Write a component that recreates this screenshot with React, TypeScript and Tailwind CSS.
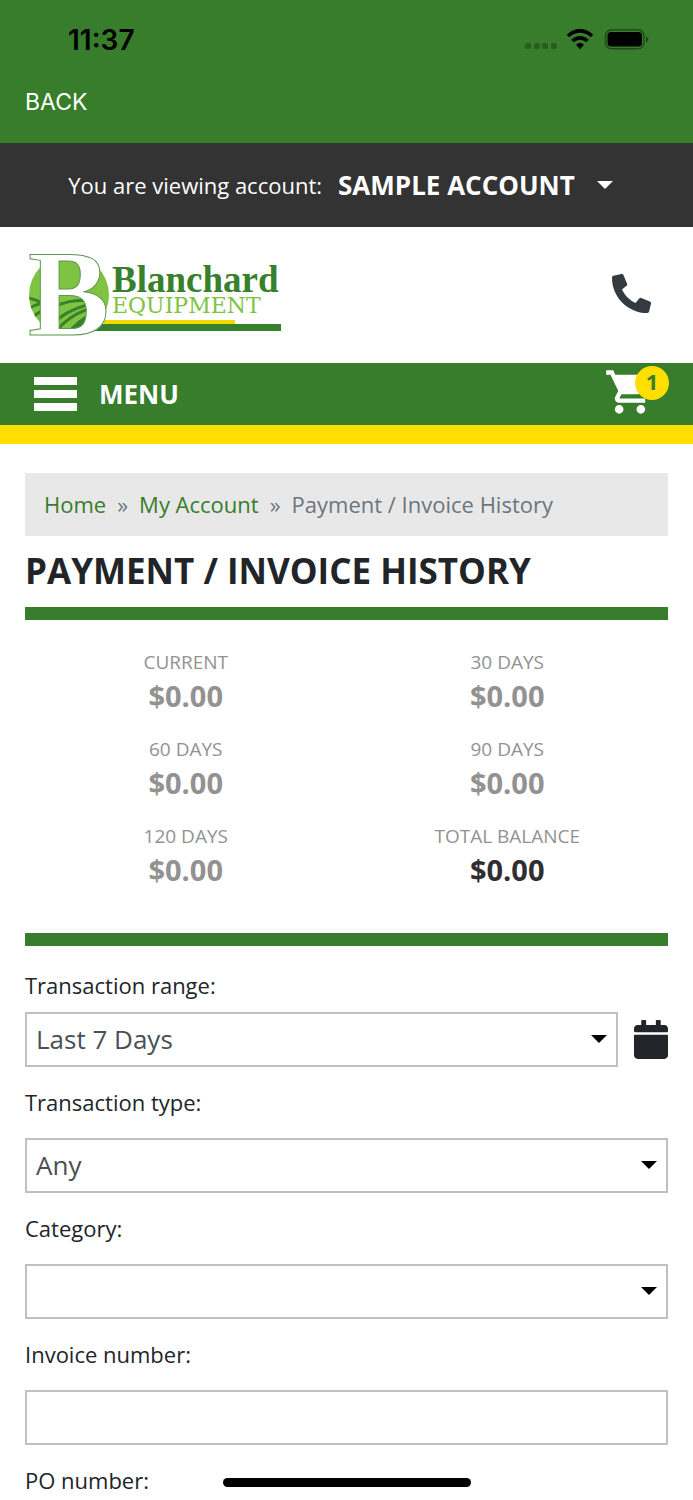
import { FaCalendar, FaPhoneAlt } from "react-icons/fa";
import { MdShoppingCart } from "react-icons/md";

const balances = [
  { label: "Current", amount: "$0.00" },
  { label: "30 Days", amount: "$0.00" },
  { label: "60 Days", amount: "$0.00" },
  { label: "90 Days", amount: "$0.00" },
  { label: "120 Days", amount: "$0.00" },
  { label: "Total Balance", amount: "$0.00", total: true },
];

const fieldClass =
  "block h-[55px] w-full appearance-none rounded-none border-2 border-[#c0c0c0] bg-white pl-[9px] pr-12 text-[26px] text-[#495057] outline-none";
const labelClass = "block text-[22px] leading-9 text-[#212529]";

function Caret({ className }: { className: string }) {
  return (
    <svg viewBox="0 0 16 8" className={className} fill="currentColor" aria-hidden="true">
      <path d="M0 0h16l-8 8z" />
    </svg>
  );
}

function StatusBar() {
  return (
    <div className="flex h-16 items-end justify-between pb-2 pl-[68px] pr-11 text-black">
      <span className="font-['Inter',sans-serif] text-[28px] font-semibold leading-8">11:37</span>
      <svg width="124" height="28" viewBox="0 -1 124 28" aria-hidden="true">
        <g opacity=".25">
          <rect x="0" y="14" width="6" height="6" rx="2" />
          <rect x="9" y="14" width="6" height="6" rx="2" />
          <rect x="17" y="14" width="6" height="6" rx="2" />
          <rect x="26" y="14" width="6" height="6" rx="2" />
        </g>
        <g fill="none" stroke="currentColor" strokeWidth="3.6">
          <path d="M43 7C50 .2 60 .2 67 7" />
          <path d="M47.500 12C52 7.800 58 7.800 62.500 12" />
        </g>
        <path d="M51 15.800c2.500-2.400 5.500-2.400 8 0l-4 4.400z" />
        <rect x="80.500" y=".800" width="38.500" height="19" rx="6" fill="none" stroke="currentColor" strokeOpacity=".4" strokeWidth="1.500" />
        <rect x="82.500" y="3" width="34.500" height="14.500" rx="3.500" />
        <path d="M121 7.500c3 1 3 5 0 6z" opacity=".4" />
      </svg>
    </div>
  );
}

function Logo() {
  return (
    <svg width="256" height="88" viewBox="0 0 256 88" className="overflow-visible" role="img" aria-label="Blanchard Equipment">
      <defs>
        <clipPath id="field">
          <circle cx="41" cy="46" r="40" />
        </clipPath>
      </defs>
      <g clipPath="url(#field)">
        <rect width="84" height="88" fill="#80c342" />
        <g stroke="#37802c" strokeWidth="3" fill="none">
          <path d="M0 49Q12 51 24 60" />
          <path d="M2 59Q12 53 24 54" />
          <path d="M4 69Q12 61 26 57" />
          <path d="M30 56Q50 48 72 54" />
          <path d="M30 70Q46 57 72 54" />
          <path d="M30 80Q46 62 72 57" />
        </g>
        <path d="M36 88Q46 71 70 60V88Z" fill="#37802c" />
      </g>
      <rect x="76" y="71" width="131" height="5" fill="#f2d900" />
      <rect x="66" y="75" width="187" height="7" fill="#37802c" />
      <text x="0" y="86" fontFamily="Liberation Serif, serif" fontWeight="700" fontSize="122" fill="#fff" stroke="#5a9a50" strokeWidth="1">B</text>
      <text x="84" y="43" fontFamily="Liberation Serif, serif" fontWeight="700" fontSize="37" fill="#37802c">Blanchard</text>
      <text x="84" y="64" fontFamily="DejaVu Serif, serif" fontSize="22" fill="#80c342">EQUIPMENT</text>
    </svg>
  );
}

function Divider() {
  return <div className="h-[13px] bg-[#377d2b]" />;
}

export default function App() {
  return (
    <div className="flex h-dvh flex-col overflow-hidden bg-white font-['Open_Sans',sans-serif] text-[#212529]">
      <div className="h-[143px] shrink-0 bg-[#377d2b]">
        <StatusBar />
        <button type="button" className="ml-[25px] mt-[22px] block font-['Inter',sans-serif] text-[23px] leading-8 text-white">
          BACK
        </button>
      </div>

      <div className="min-h-0 flex-1 overflow-y-auto [scrollbar-width:none]">
        <div className="flex h-[84px] items-center justify-center bg-[#333] px-4 text-white">
          <span className="text-[22px]">You are viewing account:</span>
          <button type="button" className="ml-4 flex items-center text-[26px] font-bold">
            SAMPLE ACCOUNT
            <Caret className="ml-[22px] mr-3 h-2 w-4" />
          </button>
        </div>

        <header>
          <div className="flex h-[136px] items-center justify-between pb-1 pl-7 pr-[42px]">
            <a href="#home">
              <Logo />
            </a>
            <a href="#call" aria-label="Call us">
              <FaPhoneAlt className="size-[39px] text-[#343a40]" />
            </a>
          </div>
          <nav className="flex h-[81px] items-center justify-between border-b-[19px] border-[#ffde00] bg-[#377d2b] pl-[34px] pr-6 text-white">
            <button type="button" className="flex items-center gap-[22px] text-[26px] font-bold">
              <span className="flex w-[43px] flex-col gap-[5px]">
                <span className="h-2 bg-white" />
                <span className="h-2 bg-white" />
                <span className="h-2 bg-white" />
              </span>
              MENU
            </button>
            <a href="#cart" aria-label="Cart, 1 item" className="relative block w-[65px] pb-1">
              <MdShoppingCart className="size-[52px]" />
              <span className="absolute right-0 top-0 flex size-[34px] items-center justify-center rounded-full bg-[#ffde00] pb-1 text-[22px] font-bold text-[#377d2b]">
                1
              </span>
            </a>
          </nav>
        </header>

        <main className="px-[25px] pt-[29px]">
          <nav aria-label="Breadcrumb" className="bg-[#e8e8e8] px-[19px] text-[22px] leading-[63px] text-[#6c757d]">
            <ol className="flex gap-[11px]">
              <li><a href="#home" className="text-[#377d2b]">Home</a></li>
              <li aria-hidden="true">»</li>
              <li><a href="#account" className="text-[#377d2b]">My Account</a></li>
              <li aria-hidden="true">»</li>
              <li>Payment / Invoice History</li>
            </ol>
          </nav>
          <h1 className="mb-3 mt-[11px] text-[35px] font-bold leading-[48px] uppercase">Payment / Invoice History</h1>
          <Divider />

          <dl className="grid grid-cols-2 gap-y-[19px] pb-[43px] pt-7 text-center">
            {balances.map((b) => (
              <div key={b.label} className={b.total ? "text-[#2f2f33]" : "text-[#929292]"}>
                <dt className="text-[19px] leading-7 uppercase text-[#929292]">{b.label}</dt>
                <dd className="text-[29px] font-bold leading-10">{b.amount}</dd>
              </div>
            ))}
          </dl>
          <Divider />

          <form className="pt-[21px]">
            <label htmlFor="range" className={labelClass}>Transaction range:</label>
            <div className="mb-[17px] mt-[9px] flex items-center gap-4">
              <div className="relative flex-1">
                <select id="range" className={fieldClass}>
                  <option>Last 7 Days</option>
                  <option>Last 30 Days</option>
                </select>
                <Caret className="pointer-events-none absolute right-[11px] top-[23px] h-2 w-4 text-black" />
              </div>
              <button type="button" aria-label="Pick dates">
                <FaCalendar className="h-[39px] w-[34px]" />
              </button>
            </div>

            <label htmlFor="type" className={labelClass}>Transaction type:</label>
            <div className="relative mb-[17px] mt-[18px]">
              <select id="type" className={fieldClass}>
                <option>Any</option>
                <option>Invoice</option>
              </select>
              <Caret className="pointer-events-none absolute right-[11px] top-[23px] h-2 w-4 text-black" />
            </div>

            <label htmlFor="category" className={labelClass}>Category:</label>
            <div className="relative mb-[17px] mt-[18px]">
              <select id="category" className={fieldClass}>
                <option></option>
              </select>
              <Caret className="pointer-events-none absolute right-[11px] top-[23px] h-2 w-4 text-black" />
            </div>

            <label htmlFor="invoice" className={labelClass}>Invoice number:</label>
            <div className="mb-[17px] mt-[18px]">
              <input id="invoice" type="text" className={fieldClass} />
            </div>

            <label htmlFor="po" className={labelClass}>PO number:</label>
            <div className="mb-10 mt-[18px]">
              <input id="po" type="text" className={fieldClass} />
            </div>
          </form>
        </main>
      </div>

      <div className="fixed bottom-[13px] left-1/2 h-[9px] w-[248px] -translate-x-1/2 rounded-full bg-black" />
    </div>
  );
}
